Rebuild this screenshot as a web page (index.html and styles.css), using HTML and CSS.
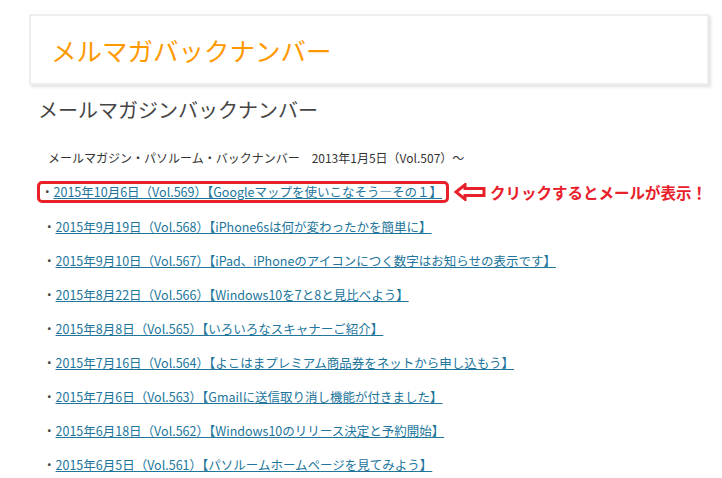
FILE: index.html
```html
<!DOCTYPE html>
<html lang="ja">
<head>
  <meta charset="UTF-8" />
  <meta name="viewport" content="width=device-width, initial-scale=1.0" />
  <title>メルマガバックナンバー</title>
  <link rel="stylesheet" href="styles.css">
</head>
<body>
  <div class="site-header">
    <h1 class="site-title">メルマガバックナンバー</h1>
  </div>
  <div class="content">
    <h2 class="entry-title">メールマガジンバックナンバー</h2>
    <p class="intro">メールマガジン・パソルーム・バックナンバー　2013年1月5日（Vol.507）～</p>
    <ul class="backnumbers">
      <li class="first">
        <span class="marked">・<a href="#">2015年10月6日（Vol.569）【Googleマップを使いこなそう―その１】</a></span>
        <svg class="arrow" width="32" height="18" viewBox="0 0 32 18">
          <path d="M2 9 L11 1.8 L11 5.5 L30 5.5 L30 12.5 L11 12.5 L11 16.2 Z" fill="none" stroke="#e8202a" stroke-width="3" stroke-linejoin="miter"/>
        </svg>
        <span class="note">クリックするとメールが表示！</span>
      </li>
      <li>・<a href="#">2015年9月19日（Vol.568）【iPhone6sは何が変わったかを簡単に】</a></li>
      <li>・<a href="#">2015年9月10日（Vol.567）【iPad、iPhoneのアイコンにつく数字はお知らせの表示です】</a></li>
      <li>・<a href="#">2015年8月22日（Vol.566）【Windows10を7と8と見比べよう】</a></li>
      <li>・<a href="#">2015年8月8日（Vol.565）【いろいろなスキャナーご紹介】</a></li>
      <li>・<a href="#">2015年7月16日（Vol.564）【よこはまプレミアム商品券をネットから申し込もう】</a></li>
      <li>・<a href="#">2015年7月6日（Vol.563）【Gmailに送信取り消し機能が付きました】</a></li>
      <li>・<a href="#">2015年6月18日（Vol.562）【Windows10のリリース決定と予約開始】</a></li>
      <li>・<a href="#">2015年6月5日（Vol.561）【パソルームホームページを見てみよう】</a></li>
    </ul>
  </div>
</body>
</html>
```

FILE: styles.css
```css
body {
  margin: 0;
  font-family: "Noto Sans CJK JP", "Noto Sans", sans-serif;
  color: #444;
  background: #fff;
}
.site-header {
  box-sizing: border-box;
  margin: 14px 0 0 29px;
  width: 680px;
  height: 71px;
  border: 2px solid #eee;
  box-shadow: 2px 2px 3px rgba(0, 0, 0, 0.12);
  display: flex;
  align-items: center;
  padding-left: 20px;
}
.site-title {
  margin: 0;
  font-size: 25.5px;
  font-weight: normal;
  color: #ff9900;
  line-height: 30px;
}
.content {
  margin-left: 38px;
}
.entry-title {
  margin: 13px 0 0;
  font-size: 20px;
  line-height: 24px;
  font-weight: normal;
  color: #444;
}
.intro {
  margin: 19px 0 0;
  padding-left: 10px;
  font-size: 12px;
  line-height: 34px;
  color: #333;
}
.backnumbers {
  list-style: none;
  margin: 0;
  padding: 0 0 0 5px;
}
.backnumbers li {
  height: 34px;
  display: flex;
  align-items: center;
  font-size: 12.5px;
  white-space: nowrap;
}
.backnumbers a {
  color: #21759b;
  text-decoration: underline;
}
.marked {
  margin-left: -6px;
  padding: 0 4px 0 1px;
  border: 3px solid #e8202a;
  border-radius: 5px;
  line-height: 16px;
}
.arrow {
  margin-left: 5px;
}
.note {
  margin-left: 4px;
  color: #e8202a;
  font-weight: bold;
  font-size: 15.5px;
}
```
